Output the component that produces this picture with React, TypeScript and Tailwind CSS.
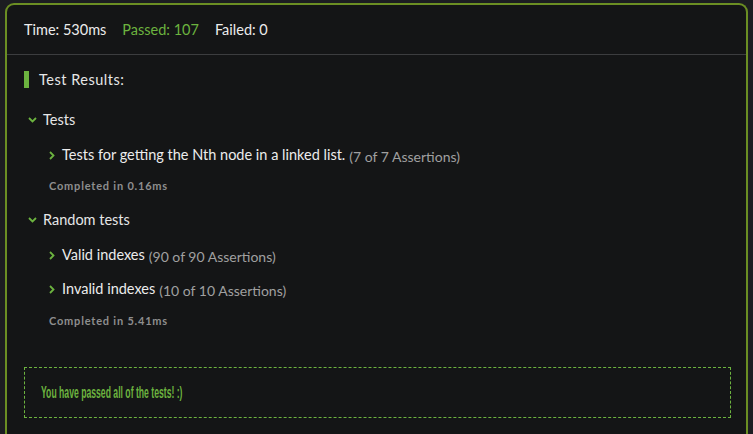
const GREEN = "text-[#6cb33f]";

function ChevronDown() {
  return (
    <svg width="9" height="6" viewBox="0 0 9 6" className="shrink-0">
      <polyline points="1,1 4.5,4.5 8,1" fill="none" stroke="#6cb33f" strokeWidth="1.8" />
    </svg>
  );
}

function ChevronRight() {
  return (
    <svg width="6" height="9" viewBox="0 0 6 9" className="shrink-0">
      <polyline points="1,1 4.5,4.5 1,8" fill="none" stroke="#6cb33f" strokeWidth="1.8" />
    </svg>
  );
}

function Group({ title, className }: { title: string; className?: string }) {
  return (
    <div className={`flex h-[20px] items-center gap-[6px] pl-[4px] text-[14.5px] text-[#e6e6e6] ${className ?? ""}`}>
      <ChevronDown />
      <span>{title}</span>
    </div>
  );
}

function Item({ title, count, className }: { title: string; count: string; className?: string }) {
  return (
    <div className={`flex h-[20px] items-center pl-[25px] text-[14.5px] ${className ?? ""}`}>
      <ChevronRight />
      <span className="ml-[7px] text-[#ececec]">{title}</span>
      <span className="ml-[4px] mt-[3px] text-[14px] text-[#a0a0a0]">{count}</span>
    </div>
  );
}

function Completed({ time, className }: { time: string; className?: string }) {
  return (
    <div className={`h-[14px] pl-[25px] text-[11px] leading-[14px] font-bold tracking-[0.8px] text-[#8e8e8e] ${className ?? ""}`}>
      Completed in {time}
    </div>
  );
}

export default function App() {
  return (
    <div className="min-h-[434px] bg-[#1c1d21] px-[5px] pt-[3px] font-['Lato','Noto_Sans',sans-serif]">
      <div className="h-[440px] rounded-t-[9px] border-2 border-b-0 border-[#6b8e23] bg-[#141516]">
        <div className="flex h-[50px] items-center gap-[16px] border-b border-[#3c3d3f] px-[17px] pt-[1px] text-[14.5px]">
          <span className="text-[#ececec]">Time: 530ms</span>
          <span className={GREEN}>Passed: 107</span>
          <span className="text-[#ececec]">Failed: 0</span>
        </div>

        <div className="px-[17px] pt-[16px]">
          <div className="flex h-[17px] items-center">
            <div className="h-[17px] w-[5px] bg-[#6cb33f]" />
            <span className="ml-[10px] text-[14.5px] tracking-[0.5px] text-[#e6e6e6]">Test Results:</span>
          </div>

          <Group title="Tests" className="mt-[22px]" />
          <Item
            title="Tests for getting the Nth node in a linked list."
            count="(7 of 7 Assertions)"
            className="mt-[15px]"
          />
          <Completed time="0.16ms" className="mt-[14px]" />

          <Group title="Random tests" className="mt-[17px]" />
          <Item title="Valid indexes" count="(90 of 90 Assertions)" className="mt-[15px]" />
          <Item title="Invalid indexes" count="(10 of 10 Assertions)" className="mt-[14px]" />
          <Completed time="5.41ms" className="mt-[15px]" />

          <div className="mt-[39px] mr-[-2px] flex h-[51px] items-center border border-dashed border-[#6cb33f] px-[16px]">
            <span className={`inline-block origin-left scale-x-[0.54] whitespace-nowrap font-['Liberation_Sans',sans-serif] text-[16px] font-bold ${GREEN}`}>
              You have passed all of the tests! :)
            </span>
          </div>
        </div>
      </div>
    </div>
  );
}
